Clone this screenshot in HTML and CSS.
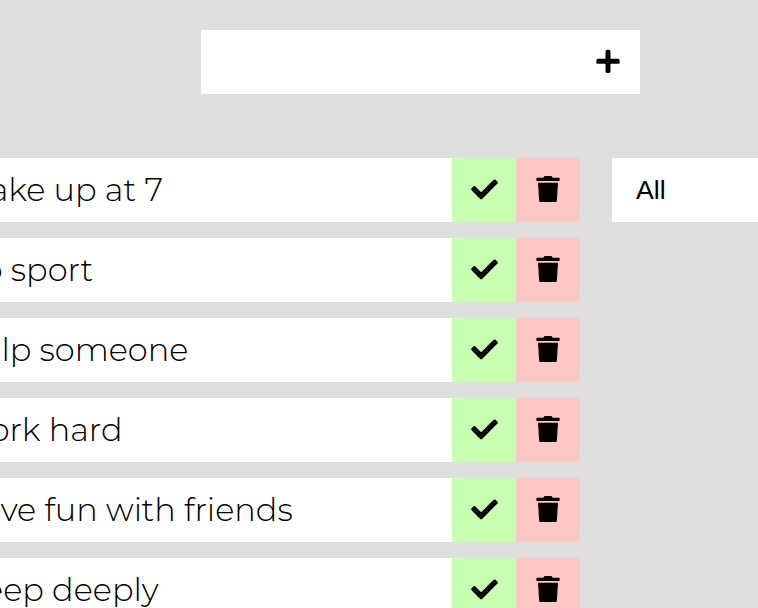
FILE: index.html
```
<!DOCTYPE html>
<html lang="en">
<head>
<meta charset="utf-8">
<title>Todo List</title>
<link rel="stylesheet" href="styles.css">
</head>
<body>
<svg class="symbols" aria-hidden="true">
<symbol id="plus" viewBox="0 0 448 512"><path d="M416 208H272V64c0-17.67-14.33-32-32-32h-32c-17.67 0-32 14.33-32 32v144H32c-17.67 0-32 14.33-32 32v32c0 17.67 14.33 32 32 32h144v144c0 17.67 14.33 32 32 32h32c17.67 0 32-14.33 32-32V304h144c17.67 0 32-14.33 32-32v-32c0-17.67-14.33-32-32-32z"/></symbol>
<symbol id="check" viewBox="0 0 512 512"><path d="M173.898 439.404l-166.4-166.4c-9.997-9.997-9.997-26.206 0-36.204l36.203-36.204c9.997-9.998 26.207-9.998 36.204 0L192 312.69 432.095 72.596c9.997-9.997 26.207-9.997 36.204 0l36.203 36.204c9.997 9.997 9.997 26.206 0 36.204l-294.4 294.401c-9.998 9.997-26.207 9.997-36.204-.001z"/></symbol>
<symbol id="trash" viewBox="0 0 448 512"><path d="M432 32H312l-9.4-18.7A24 24 0 0 0 281.1 0H166.8a23.72 23.72 0 0 0-21.4 13.3L136 32H16A16 16 0 0 0 0 48v32a16 16 0 0 0 16 16h416a16 16 0 0 0 16-16V48a16 16 0 0 0-16-16zM53.2 467a48 48 0 0 0 47.9 45h245.8a48 48 0 0 0 47.9-45L416 128H32z"/></symbol>
</svg>
<form class="add"><button class="plus" type="button"><svg class="narrow"><use href="#plus"/></svg></button></form>
<main class="board">
<ul class="list">
<li class="todo"><span class="label">Wake up at 7</span><button class="done" type="button"><svg><use href="#check"/></svg></button><button class="remove" type="button"><svg class="narrow"><use href="#trash"/></svg></button></li>
<li class="todo"><span class="label">Do sport</span><button class="done" type="button"><svg><use href="#check"/></svg></button><button class="remove" type="button"><svg class="narrow"><use href="#trash"/></svg></button></li>
<li class="todo"><span class="label">Help someone</span><button class="done" type="button"><svg><use href="#check"/></svg></button><button class="remove" type="button"><svg class="narrow"><use href="#trash"/></svg></button></li>
<li class="todo"><span class="label">Work hard</span><button class="done" type="button"><svg><use href="#check"/></svg></button><button class="remove" type="button"><svg class="narrow"><use href="#trash"/></svg></button></li>
<li class="todo"><span class="label">Have fun with friends</span><button class="done" type="button"><svg><use href="#check"/></svg></button><button class="remove" type="button"><svg class="narrow"><use href="#trash"/></svg></button></li>
<li class="todo"><span class="label">Sleep deeply</span><button class="done" type="button"><svg><use href="#check"/></svg></button><button class="remove" type="button"><svg class="narrow"><use href="#trash"/></svg></button></li>
</ul>
<div class="filter">All</div>
</main>
</body>
</html>
```
FILE: styles.css
```
* { box-sizing: border-box; }
body { margin: 0; padding-top: 30px; height: 608px; overflow: hidden; background: #dedede; color: #000; font-family: Montserrat, Inter, sans-serif; }
.symbols { display: none; }
button { width: 64px; height: 64px; padding: 0 0 2px; border: 0; display: flex; align-items: center; justify-content: center; background: #fff; flex: none; }
button svg { width: 27px; height: 26.67px; }
button svg.narrow { width: 24px; }
.plus { padding-right: 1px; }
.add { width: 439px; height: 64px; margin: 0 0 64px 201px; background: #fff; display: flex; justify-content: flex-end; }
.board { display: flex; align-items: flex-start; gap: 32px; }
.list { list-style: none; margin: 0 0 0 -60px; padding: 0; width: 640px; flex: none; display: grid; gap: 16px; }
.todo { height: 64px; display: flex; background: #fff; }
.label { flex: 1; padding-left: 16.25px; line-height: 64px; font-size: 32px; font-weight: 300; white-space: nowrap; }
.done { background: #c6ffb0; }
.remove { background: #ffc6c6; }
.filter { flex: 1; height: 64px; padding-left: 24px; background: #fff; font: 26.67px/64px "Liberation Sans", sans-serif; }
```
